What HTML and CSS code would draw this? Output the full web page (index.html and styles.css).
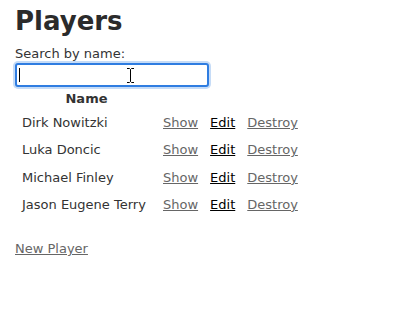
FILE: index.html
```html
<!DOCTYPE html>
<html lang="en">
<head>
    <meta charset="UTF-8">
    <meta name="viewport" content="width=device-width, initial-scale=1.0">
    <title>Players</title>
    <link rel="stylesheet" href="styles.css">
</head>
<body>

<h1>Players</h1>

<div class="search">
    <label for="search">Search by name:</label>
    <div class="search-field">
        <input type="text" id="search">
        <span class="caret"></span>
        <svg class="ibeam" width="9" height="17" viewBox="0 0 9 17">
            <path d="M1 1.5h2.5l1 1 1-1H8M4.5 2.5v12M1 15.5h2.5l1-1 1 1H8" fill="none" stroke="#fff" stroke-width="3"/>
            <path d="M1 1.5h2.5l1 1 1-1H8M4.5 2.5v12M1 15.5h2.5l1-1 1 1H8" fill="none" stroke="#000" stroke-width="1"/>
        </svg>
    </div>
</div>

<table class="players">
    <thead>
        <tr>
            <th>Name</th>
            <th colspan="3"></th>
        </tr>
    </thead>
    <tbody>
        <tr>
            <td>Dirk Nowitzki</td>
            <td><a href="#">Show</a></td>
            <td><a href="#" class="edit">Edit</a></td>
            <td><a href="#">Destroy</a></td>
        </tr>
        <tr>
            <td>Luka Doncic</td>
            <td><a href="#">Show</a></td>
            <td><a href="#" class="edit">Edit</a></td>
            <td><a href="#">Destroy</a></td>
        </tr>
        <tr>
            <td>Michael Finley</td>
            <td><a href="#">Show</a></td>
            <td><a href="#" class="edit">Edit</a></td>
            <td><a href="#">Destroy</a></td>
        </tr>
        <tr>
            <td>Jason Eugene Terry</td>
            <td><a href="#">Show</a></td>
            <td><a href="#" class="edit">Edit</a></td>
            <td><a href="#">Destroy</a></td>
        </tr>
    </tbody>
</table>

<p class="new-link"><a href="#">New Player</a></p>

</body>
</html>
```

FILE: styles.css
```css
body {
    font-family: "DejaVu Sans", Verdana, sans-serif;
    font-size: 13px;
    line-height: 16px;
    color: #333;
    background-color: #fff;
    margin: 0;
    padding: 0 15px;
}
h1 {
    font-size: 26px;
    line-height: 30px;
    margin: 6px 0 10px;
    color: #2b2b2b;
}
a {
    color: #666;
}
a.edit {
    color: #000;
}
.search label {
    display: block;
}
.search-field {
    position: relative;
    width: 194px;
    height: 24px;
    margin-top: 1px;
}
.search-field input {
    box-sizing: border-box;
    width: 194px;
    height: 24px;
    margin: 0;
    padding: 2px 4px;
    border: 2px solid #2f7de1;
    border-radius: 3px;
    box-shadow: 0 0 0 2px #c6dcf7;
    outline: none;
    font: inherit;
}
.caret {
    position: absolute;
    left: 4px;
    top: 5px;
    width: 1px;
    height: 14px;
    background-color: #000;
}
.ibeam {
    position: absolute;
    left: 111px;
    top: 4px;
}
.players {
    border-spacing: 2px;
    margin: -2px 0 0;
}
.players th,
.players td {
    padding: 5px 5px 5.3px;
    line-height: 15px;
    text-align: left;
}
.players th {
    padding: 4px 5px 1px;
    line-height: 16px;
    text-align: center;
}
.players td:first-child {
    width: 129px;
}
.new-link {
    margin: 22px 0 0;
}
```
